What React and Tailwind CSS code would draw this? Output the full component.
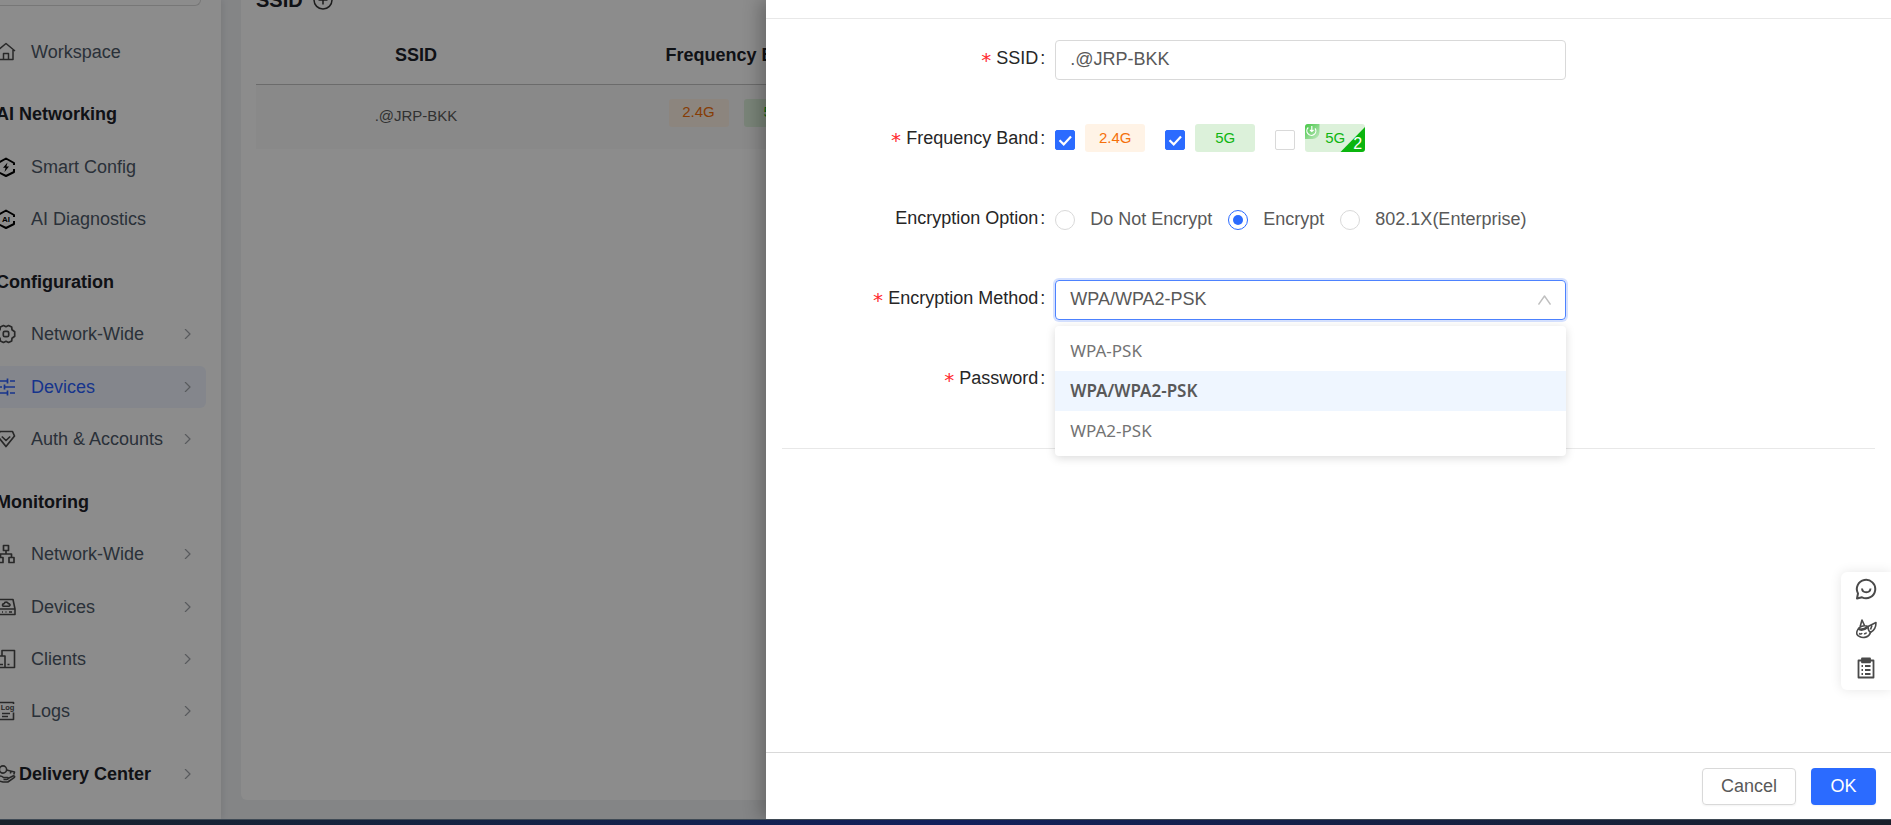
import React from "react";

const S = ({ children, size = "size-[20px]", box = "0 0 20 20", w = 1.5, className = "" }) => (
  <svg viewBox={box} className={`${size} shrink-0 ${className}`} fill="none" stroke="currentColor" strokeWidth={w} strokeLinejoin="round" aria-hidden="true">
    {children}
  </svg>
);

const icons = {
  home: <S><path d="M1 9 10 1.500l9 7.500M3 8v9.500h14V8M7.500 17.500v-6h5v6" /></S>,
  smart: (
    <S w={2} className="text-black">
      <path d="M2 8V6l8-4.500L18 6v2M2 12v3l8 4 8-4v-3" />
      <path d="M11.500 5.500 7 10.800h2.600L8.500 15 13 9.400h-2.600z" fill="currentColor" stroke="none" />
    </S>
  ),
  ai: (
    <S w={2} className="text-black">
      <path d="M2 8V6l8-4.500L18 6v2M2 12v3l8 4 8-4v-3" />
      <text x="10" y="13" fontSize="8" fontWeight="700" textAnchor="middle" fill="currentColor" stroke="none" fontFamily="Liberation Sans, sans-serif">AI</text>
    </S>
  ),
  gear: (
    <S w={1.700}>
      <path d="M7.500 1.500 10 2.700l2.500-1.200 3.200 1.600.3 2.700 2.700 2v4.400l-2.700 2-.3 2.700-3.200 1.600L10 17.300l-2.500 1.200-3.200-1.600-.3-2.700-2.700-2V7.800l2.700-2 .3-2.700z" />
      <rect x="7.300" y="7.300" width="5.400" height="5.400" rx="1.500" />
    </S>
  ),
  sliders: <S w={1.700}><path d="M1 4h10M14 4h5M11.500 1.500v5M1 10h5M9 10h10M8.500 7.500v5M1 16h10M14 16h5M11.500 13.500v5" /></S>,
  gem: <S w={1.700}><path d="M4 2.500h12.500l2 4.500L10 17.500 1.500 7zM5.800 7.500l4.200 4 4.200-4" /></S>,
  tree: <S w={1.700}><path d="M7.500 1.500h5v5h-5zM2 13.500h5v5H2zM13 13.500h5v5h-5zM10 6.500V10M4.500 13.500V10h11v3.500" /></S>,
  device: <S w={1.600}><path d="M3 2.500h14l2 9.500v5.500H1V12zM1 12h18M6 15h1M9.500 15h1M13 15h3M7.500 9.300h5.500c1.800-.8 1-2.800-.6-2.700-.8-2-3.800-2-4.300 0-2 .2-2 2.400-.6 2.700z" /></S>,
  clients: <S w={1.600}><path d="M6 7V1.500h12.500v17H1V7h8v11.500M4 15.500h3M11.500 15.500h2" /></S>,
  log: (
    <S w={1.600}>
      <path d="M17.500 3V1.500H2.500v17h15V11.500M6 12.500h8M6 15.500h6" />
      <text x="11.500" y="9" fontSize="7.500" fontWeight="700" textAnchor="middle" fill="currentColor" stroke="none" fontFamily="Liberation Sans, sans-serif">Log</text>
    </S>
  ),
  key: <S w={1.600}><circle cx="7" cy="5.500" r="3.600" /><path d="m10.500 6 8 2-.7 2.500M15 7.200l-.7 2.300M1 12.500c3-1 5-.5 6.500 1h4c1 0 1 2-.5 2H7.500M12 14.500l5-2.500c2-.5 2 1 .8 1.800l-6 4.200H7l-6-1.500" /></S>,
};

const nav = [
  { t: "Workspace", icon: "home" },
  { t: "AI Networking", head: true },
  { t: "Smart Config", icon: "smart" },
  { t: "AI Diagnostics", icon: "ai" },
  { t: "Configuration", head: true },
  { t: "Network-Wide", icon: "gear", more: true },
  { t: "Devices", icon: "sliders", more: true, active: true },
  { t: "Auth & Accounts", icon: "gem", more: true },
  { t: "Monitoring", head: true },
  { t: "Network-Wide", icon: "tree", more: true },
  { t: "Devices", icon: "device", more: true },
  { t: "Clients", icon: "clients", more: true },
  { t: "Logs", icon: "log", more: true },
  { t: "Delivery Center", icon: "key", head: true, more: true },
];

function NavRow({ item }) {
  const { t, icon, head, more, active } = item;
  const tone = head
    ? "mt-[10px] font-bold text-[#1d2129]"
    : active
      ? "rounded-r-md bg-[#f0f5ff] text-[#2b5fff]"
      : "text-[#4e5969]";
  const gap = icon ? (head ? "gap-[3px]" : "gap-[15px]") : "";
  return (
    <a href="#" className={`flex h-[42px] shrink-0 items-center pr-[13px] ${tone} ${gap}`}>
      {icon && <span className={`-ml-1 flex ${active ? "text-[#2b5fff]" : "text-[#4a4a4a]"}`}>{icons[icon]}</span>}
      <span className={head && !icon ? "-ml-1 flex-1" : "flex-1"}>{t}</span>
      {more && <S size="size-[10px]" box="0 0 10 10" w={1.2} className="text-[#a0a4aa]"><path d="m2 0 5 5-5 5" /></S>}
    </a>
  );
}

function Sidebar() {
  return (
    <aside className="flex w-[221px] shrink-0 flex-col bg-white shadow-[2px_0_6px_rgba(0,0,0,0.08)]">
      <div className="mr-5 h-1.5 shrink-0 rounded-br-md border-r border-b border-[#d9d9d9]" />
      <nav className="mt-[25px] mr-[15px] mb-6 flex flex-1 flex-col justify-between">
        {nav.map((n, i) => <NavRow key={i} item={n} />)}
      </nav>
    </aside>
  );
}

const badgeTone = {
  orange: "bg-[#fff3e6] text-[#f5700a]",
  green: "bg-[#dcf1da] text-[#0fb512]",
};

function Badge({ tone, children }) {
  return (
    <span className={`relative inline-flex h-7 w-[60px] items-center justify-center overflow-hidden rounded-[3px] pb-px text-[15px] ${badgeTone[tone]}`}>
      {children}
    </span>
  );
}

function Content() {
  return (
    <main className="mb-[19px] ml-5 min-w-0 flex-1 overflow-hidden rounded-b-md bg-white pl-[15px]">
      <div className="-mt-3 flex h-6 items-center gap-[10px] text-xl font-bold text-[#1d2129]">
        <h2>SSID</h2>
        <button aria-label="Add SSID" className="text-[#333]">
          <S><circle cx="10" cy="10" r="9" /><path d="M5.500 10h9M10 5.500v9" /></S>
        </button>
      </div>
      <table className="mt-[15px] w-[960px] table-fixed text-center">
        <thead>
          <tr className="h-[57px] border-b border-[#c4c4c4] text-[#1d2129]">
            <th>SSID</th>
            <th>Frequency Band</th>
            <td />
          </tr>
        </thead>
        <tbody>
          <tr className="h-[65px] bg-[#fafafa] text-[15px] text-[#5a5a5a]">
            <td className="pb-px">.@JRP-BKK</td>
            <td>
              <div className="flex justify-center gap-[15px] pb-2"><Badge tone="orange">2.4G</Badge><Badge tone="green">5G</Badge></div>
            </td>
            <td />
          </tr>
        </tbody>
      </table>
    </main>
  );
}

function Field({ label, id, required, children }) {
  return (
    <div className="grid h-10 grid-cols-[25%_75%]">
      <label htmlFor={id} className="flex h-9 items-center justify-end pr-[10px] text-[#262626]">
        {required && <span className="mr-1 pt-1 font-['DejaVu_Sans_Mono',monospace] text-xl leading-none text-[#ff2a2f]">*</span>}
        {label}
        <span className="ml-[2px]">:</span>
      </label>
      <div className="flex h-10 items-center">{children}</div>
    </div>
  );
}

function Check({ id, label, checked }) {
  return (
    <span className="mt-1 mr-[10px] grid size-5">
      <input id={id} type="checkbox" aria-label={label} defaultChecked={checked} className="peer col-start-1 row-start-1 size-5 appearance-none rounded-[2px] border border-[#d9d9d9] bg-white checked:border-[#2b6bff] checked:bg-[#2b6bff]" />
      <svg viewBox="0 0 20 20" className="pointer-events-none invisible col-start-1 row-start-1 size-5 text-white peer-checked:visible" fill="none" stroke="currentColor" strokeWidth="2.200" aria-hidden="true">
        <path d="m4.500 10.200 4.200 4.200 7.300-8" />
      </svg>
    </span>
  );
}

function Radio({ label, checked }) {
  return (
    <label className="mr-4 flex items-center gap-[15px] text-[#595959]">
      <input type="radio" name="encryption" defaultChecked={checked} className="grid size-5 appearance-none place-items-center rounded-full border border-[#d9d9d9] before:size-[10px] before:rounded-full checked:border-[#2b6bff] checked:before:bg-[#2b6bff]" />
      <span className="pb-0.5">{label}</span>
    </label>
  );
}

function Drawer() {
  return (
    <section role="dialog" aria-label="Edit SSID" className="absolute inset-y-0 right-0 flex w-[1125px] flex-col bg-white shadow-[-6px_0_16px_rgba(0,0,0,0.25)]">
      <header className="h-[19px] shrink-0 border-b border-[#e8e8e8]" />
      <form className="flex-1 px-4 pt-[21px]">
        <div className="flex flex-col gap-10 border-b border-[#e8e8e8] pb-12">
          <Field label="SSID" id="ssid" required>
            <input id="ssid" defaultValue=".@JRP-BKK" className="h-10 w-[511px] rounded-[4px] border border-[#d9d9d9] px-[14px] pb-0.5 text-[#595959]" />
          </Field>
          <Field label="Frequency Band" id="b24" required>
            <div className="-mt-1 flex h-7 items-start">
              <div className="mr-5 flex items-center"><Check id="b24" label="2.4G" checked /><Badge tone="orange">2.4G</Badge></div>
              <div className="mr-5 flex items-center"><Check id="b5" label="5G" checked /><Badge tone="green">5G</Badge></div>
              <div className="flex items-center">
                <Check id="b52" label="5G 2" />
                <Badge tone="green">
                  5G
                  <svg viewBox="0 0 60 28" className="absolute inset-0 h-7 w-[60px]" aria-hidden="true">
                    <defs>
                      <linearGradient id="corner" x1="0" y1="0" x2="1" y2="1"><stop offset="0" stopColor="#45c746" /><stop offset="1" stopColor="#c3e9c2" /></linearGradient>
                    </defs>
                    <path d="M0 0h14.500v8a7 7 0 0 1-7 7H0z" fill="url(#corner)" />
                    <path d="M3.300 3.500a4.500 4.500 0 1 0 6.800.8M6.800 2v5.500M5 6l1.800 1.500L8.600 6" fill="none" stroke="#fff" strokeWidth="1.200" />
                    <path d="M60 3v25H35.500z" fill="#0bb50e" />
                  </svg>
                  <span className="absolute right-[3px] bottom-0 text-base leading-4 text-white">2</span>
                </Badge>
              </div>
            </div>
          </Field>
          <Field label="Encryption Option">
            <Radio label="Do Not Encrypt" />
            <Radio label="Encrypt" checked />
            <Radio label="802.1X(Enterprise)" />
          </Field>
          <Field label="Encryption Method" id="method" required>
            <div className="relative w-[511px]">
              <button id="method" type="button" role="combobox" aria-expanded="true" aria-controls="methods" className="flex h-10 w-full items-center justify-between rounded-[4px] border border-[#4d82ff] px-[14px] text-[#595959] shadow-[0_0_0_2px_rgba(43,107,255,0.2)]">
                <span className="pb-0.5">WPA/WPA2-PSK</span>
                <S size="h-[10px] w-[13px]" box="0 0 13 10" w={1.4} className="text-[#bfbfbf]"><path d="M.5 9.500 6.500 1l6 8.500" /></S>
              </button>
              <ul id="methods" role="listbox" className="absolute top-[46px] left-0 z-10 w-full rounded-[4px] bg-white py-[5px] font-['Noto_Sans',sans-serif] text-[17px] text-[#737373] shadow-[0_2px_10px_rgba(0,0,0,0.15)]">
                <li role="option" aria-selected="false" className="flex h-10 items-center px-[15px]">WPA-PSK</li>
                <li role="option" aria-selected="true" className="flex h-10 items-center bg-[#eff6ff] px-[15px] font-semibold text-[#595959]">WPA/WPA2-PSK</li>
                <li role="option" aria-selected="false" className="flex h-10 items-center px-[15px]">WPA2-PSK</li>
              </ul>
            </div>
          </Field>
          <Field label="Password" id="password" required>
            <input id="password" type="password" className="h-10 w-[511px] rounded-[4px] border border-[#d9d9d9] px-[14px]" />
          </Field>
        </div>
      </form>
      <footer className="flex shrink-0 justify-end gap-[15px] border-t border-[#d9d9d9] px-[15px] pt-[15px] pb-[14px]">
        <button className="h-[37px] w-[94px] rounded-[4px] border border-[#d9d9d9] pb-0.5 text-[#595959] shadow-xs">Cancel</button>
        <button className="h-[37px] w-[65px] rounded-[4px] bg-[#2b6bff] pb-0.5 text-white shadow-xs">OK</button>
      </footer>
    </section>
  );
}

function Tools() {
  return (
    <div className="absolute top-[572px] right-0 flex h-[118px] w-[50px] flex-col items-center justify-between rounded-l-md bg-white pt-[6px] pb-[11px] text-[#4a4a4a] shadow-[0_0_12px_rgba(0,0,0,0.1)]">
      <button aria-label="Chat"><S size="size-[22px]" box="0 0 22 22" w={2}><path d="M2 20.500 3 15.500A9.200 9.200 0 1 1 7 19.300zM7 10.500c.5 5 8 5 8.500 0" /></S></button>
      <button aria-label="Assistant">
        <S size="size-[22px]" box="0 0 22 22" w={1.600}>
          <path d="M5 9 7 2l2.500 5.500M2.500 12C4 8.500 9 6.500 13 8.500L21 4.500c0 4-1.500 8-5.500 10C14 19.500 8 20.500 4.500 18.500 1.500 17.500 1 15 2.500 12zM13 8.500c0 3 1 5 2.500 6M17 7.500l-1.500 4" />
          <path d="M3 10.500c3 2 6 1.500 9.500-1.500" strokeWidth="2.600" />
          <path d="M4 15.500c1.500 1 2.500.5 3-.5M9 15.500c1 .5 2 0 2.500-1" />
        </S>
      </button>
      <button aria-label="Notes">
        <S size="size-[22px]" box="0 0 22 22" w={1.800}>
          <path d="M3.500 3.500h15v17h-15zM10 9h5.500M10 13h5.500M10 17h5.500M6.500 9H8M6.500 13H8M6.500 17H8" />
          <path d="M7 1.500h8v3.800H7z" fill="currentColor" />
        </S>
      </button>
    </div>
  );
}

export default function App() {
  return (
    <div className="flex h-screen flex-col overflow-hidden font-['Liberation_Sans',Arial,sans-serif] text-[18px] leading-6">
      <div className="relative flex min-h-0 flex-1 overflow-hidden bg-[#f0f2f5]">
        <Sidebar />
        <Content />
        <div className="absolute inset-0 bg-black/45" />
        <Drawer />
        <Tools />
      </div>
      <div className="h-1.5 shrink-0 border-t border-[#3f4a55] bg-linear-to-r from-[#19222b] via-[#12205c] to-[#191f2b]" />
    </div>
  );
}
